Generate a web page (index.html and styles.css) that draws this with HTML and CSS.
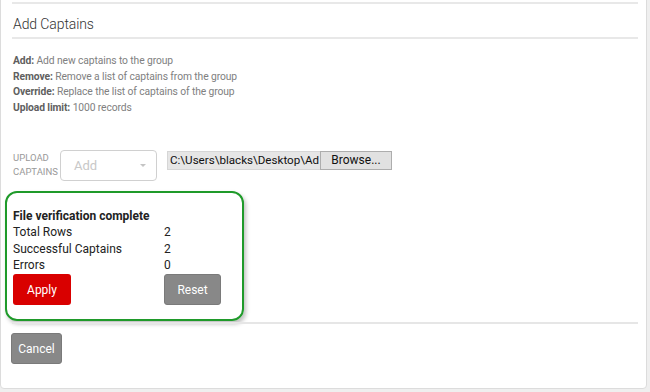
FILE: index.html
```html
<!DOCTYPE html>
<html>
<head>
<meta charset="utf-8">
<link rel="stylesheet" href="styles.css">
</head>
<body>
<div class="card">
  <div class="rule thick"></div>
  <h2 class="title">Add Captains</h2>
  <div class="rule thick"></div>
  <div class="desc">
    <div><b>Add:</b> Add new captains to the group</div>
    <div><b>Remove:</b> Remove a list of captains from the group</div>
    <div><b>Override:</b> Replace the list of captains of the group</div>
    <div><b>Upload limit:</b> 1000 records</div>
  </div>
  <div class="upload-row">
    <div class="label">UPLOAD<br>CAPTAINS</div>
    <div class="select"><span>Add</span><span class="caret"></span></div>
    <div class="file">
      <div class="path">C:\Users\blacks\Desktop\Ad</div>
      <div class="browse">Browse...</div>
    </div>
  </div>
  <div class="verify">
    <div class="vtitle">File verification complete</div>
    <div class="vrow"><span class="k">Total Rows</span><span>2</span></div>
    <div class="vrow"><span class="k">Successful Captains</span><span>2</span></div>
    <div class="vrow"><span class="k">Errors</span><span>0</span></div>
    <div class="vbtns">
      <button class="btn red apply">Apply</button>
      <button class="btn gray reset">Reset</button>
    </div>
  </div>
  <div class="rule thin"></div>
  <button class="btn gray cancel">Cancel</button>
</div>
</body>
</html>
```
FILE: styles.css
```css
html, body {
  margin: 0;
  padding: 0;
}
body {
  background: #efefef;
  font-family: Roboto, "Liberation Sans", Arial, sans-serif;
  width: 650px;
  height: 392px;
  overflow: hidden;
}
.card {
  box-sizing: border-box;
  width: 647px;
  margin-top: -10px;
  background: #fff;
  border: 1px solid #dcdcdc;
  border-radius: 4px;
  padding: 11px 8px 24px 11px;
}
.rule {
  width: 626px;
  background: #e8e8e8;
}
.rule.thick { height: 2px; }
.rule.thin { height: 2px; margin-top: 1px; background: #e6e6e6; }
.title {
  margin: 0;
  padding: 10px 0 0 1px;
  height: 23px;
  font-size: 14px;
  line-height: 20px;
  font-weight: 300;
  letter-spacing: -0.1px;
  color: #333;
}
.desc {
  margin-top: 14px;
  padding-left: 1px;
  font-size: 10.3px;
  line-height: 15.5px;
  color: #808080;
  letter-spacing: -0.1px;
}
.desc b {
  color: #606060;
  font-weight: 700;
}
.upload-row {
  display: flex;
  align-items: flex-start;
  margin-top: 35px;
  padding-left: 1px;
}
.label {
  width: 47px;
  font-size: 9.5px;
  line-height: 14px;
  color: #999;
  padding-top: 1px;
  white-space: nowrap;
}
.select {
  box-sizing: border-box;
  width: 97px;
  height: 31px;
  border: 1px solid #d0d0d0;
  border-radius: 4px;
  display: flex;
  align-items: center;
  justify-content: space-between;
  padding: 0 10px 0 13px;
  font-size: 13px;
  color: #c8c8c8;
  background: #fff;
}
.caret {
  width: 0;
  height: 0;
  border-left: 3.5px solid transparent;
  border-right: 3.5px solid transparent;
  border-top: 3.5px solid #c4c4c4;
}
.file {
  display: flex;
  margin-left: 10px;
  margin-top: 1px;
}
.path {
  box-sizing: border-box;
  width: 153px;
  height: 19px;
  background: #e6e6e6;
  border: 1px solid #d6d6d6;
  border-right: none;
  font-size: 11.6px;
  line-height: 17px;
  padding-left: 2px;
  color: #111;
  white-space: nowrap;
  overflow: hidden;
}
.browse {
  box-sizing: border-box;
  width: 72px;
  height: 19px;
  background: #e1e1e1;
  border: 1px solid #adadad;
  font-size: 12px;
  line-height: 17px;
  text-align: center;
  color: #111;
}
.verify {
  box-sizing: border-box;
  width: 239px;
  height: 130px;
  margin: 10px 0 0 -7px;
  border: 2px solid #1f9a2a;
  border-radius: 12px;
  padding: 15px 0 0 6px;
  box-shadow: 2px 3px 4px rgba(0, 0, 0, 0.25);
  font-size: 12px;
  color: #222;
}
.vtitle {
  font-weight: 700;
  line-height: 16px;
}
.vrow {
  display: flex;
  line-height: 16.7px;
}
.vrow .k {
  width: 151px;
}
.vbtns {
  display: flex;
  margin-top: 0;
}
.btn {
  box-sizing: border-box;
  height: 31px;
  border: none;
  border-radius: 3px;
  color: #fff;
  font-family: Roboto, "Liberation Sans", Arial, sans-serif;
  font-size: 12px;
  padding: 0;
}
.red { background: #d90000; }
.gray { background: #888; border: 1px solid #7a7a7a; }
.apply { width: 58px; }
.reset { width: 57px; margin-left: 93px; }
.cancel {
  display: block;
  width: 51px;
  margin: 9px 0 0 -1px;
}
```
